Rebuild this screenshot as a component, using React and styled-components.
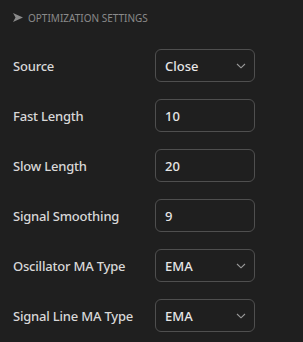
import React from "react";
import styled, { createGlobalStyle } from "styled-components";

const Global = createGlobalStyle`
	html, body {
		margin: 0;
		background: #1f1f1f;
	}
	body {
		font-family: "Noto Sans", "Open Sans", sans-serif;
	}
`;

const Panel = styled.div`
	width: 303px;
	height: 342px;
	box-sizing: border-box;
	padding: 10px 13px 0 13px;
	background: #1f1f1f;
`;

const Header = styled.div`
	display: flex;
	align-items: center;
	gap: 5px;
	height: 15px;
	font-size: 10px;
	color: #8a8a8a;
	text-transform: uppercase;
	margin-bottom: 24px;
`;

const Arrow = styled.svg`
	width: 10px;
	height: 9px;
`;

const Rows = styled.div`
	display: flex;
	flex-direction: column;
	gap: 17px;
`;

const Row = styled.div`
	display: grid;
	grid-template-columns: 142px 100px;
	align-items: center;
`;

const Label = styled.div`
	font-size: 13px;
	font-weight: 500;
	letter-spacing: -0.2px;
	color: #d8d8d8;
`;

const Field = styled.div`
	box-sizing: border-box;
	height: 33px;
	border: 1px solid #4f4f4f;
	border-radius: 6px;
	display: flex;
	align-items: center;
	justify-content: space-between;
	padding: 0 8px 0 9px;
	font-size: 13px;
	font-weight: 500;
	color: #e6e6e6;
`;

const Chevron = () => (
	<svg width="10" height="6" viewBox="0 0 10 6">
		<path d="M1 1 L5 4.8 L9 1" fill="none" stroke="#9a9a9a" strokeWidth="1.1" />
	</svg>
);

const settings = [
	{ label: "Source", value: "Close", select: true },
	{ label: "Fast Length", value: "10" },
	{ label: "Slow Length", value: "20" },
	{ label: "Signal Smoothing", value: "9" },
	{ label: "Oscillator MA Type", value: "EMA", select: true },
	{ label: "Signal Line MA Type", value: "EMA", select: true },
];

export default function App() {
	return (
		<Panel>
			<Global />
			<Header>
				<Arrow viewBox="0 0 10 9">
					<path d="M0 0 L10 4.5 L0 9 L2.5 4.5 Z" fill="#8a8a8a" />
				</Arrow>
				Optimization Settings
			</Header>
			<Rows>
				{settings.map((s) => (
					<Row key={s.label}>
						<Label>{s.label}</Label>
						<Field>
							{s.value}
							{s.select && <Chevron />}
						</Field>
					</Row>
				))}
			</Rows>
		</Panel>
	);
}
